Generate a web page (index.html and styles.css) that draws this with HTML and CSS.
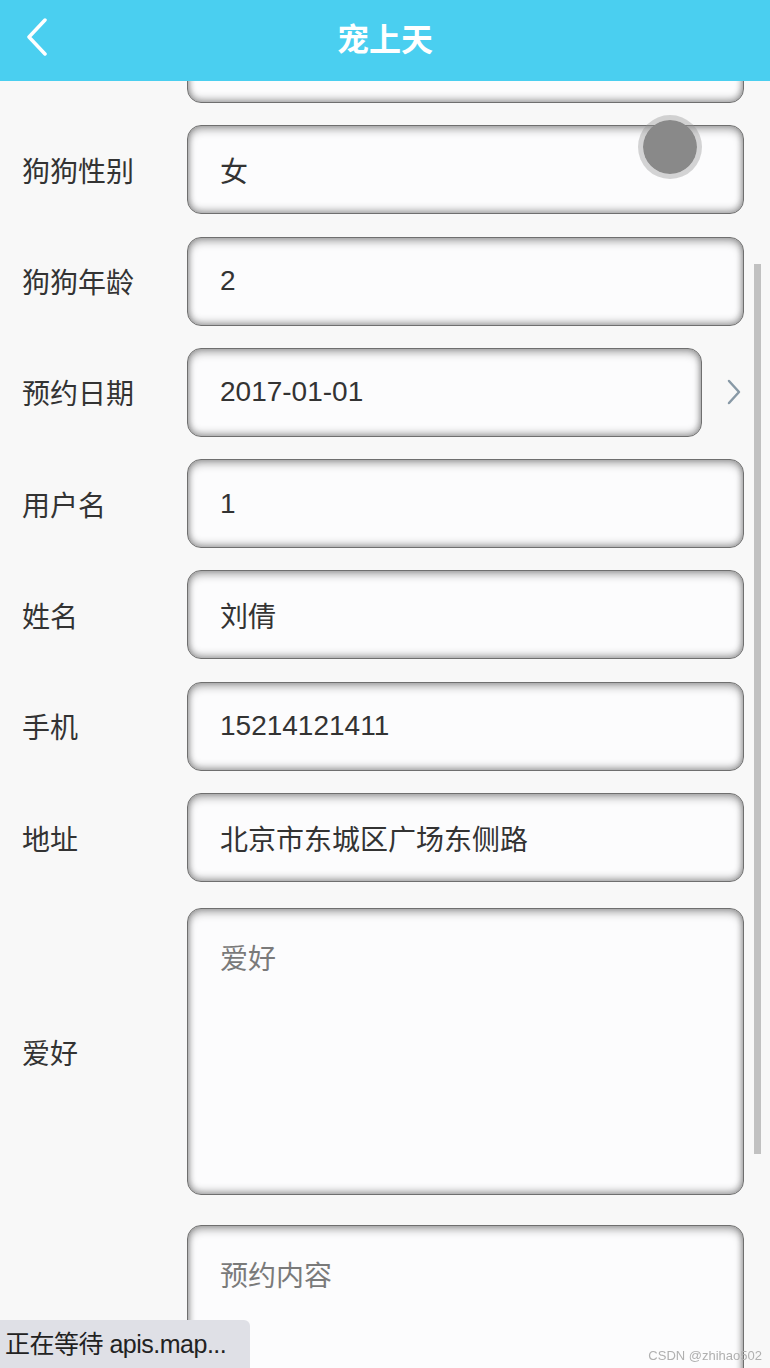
FILE: index.html
```html
<html>
<head>
	<meta charset="utf-8">
	<title>宠上天</title>
	<link rel="stylesheet" href="styles.css">
</head>
<body>
	<div class="topbar">
		<span class="back">
			<svg width="24" height="38" viewBox="0 0 24 38"><path d="M20 2 L4 19 L20 36" fill="none" stroke="#fff" stroke-width="3.5" stroke-linecap="round" stroke-linejoin="round"/></svg>
		</span>
		<span class="title">宠上天</span>
	</div>
	<div class="scroller">
		<div class="form">
			<div class="row">
				<label class="fieldname"></label>
				<input class="field" type="text" value="">
			</div>
			<div class="row">
				<label class="fieldname">狗狗性别</label>
				<input class="field" type="text" value="女">
			</div>
			<div class="row">
				<label class="fieldname">狗狗年龄</label>
				<input class="field" type="text" value="2">
			</div>
			<div class="row">
				<label class="fieldname">预约日期</label>
				<input class="field date" type="text" value="2017-01-01">
				<span class="arrow">
					<svg width="16" height="28" viewBox="0 0 16 28"><path d="M3 3 L13 14 L3 25" fill="none" stroke="#8899a6" stroke-width="2.5" stroke-linecap="round" stroke-linejoin="round"/></svg>
				</span>
			</div>
			<div class="row">
				<label class="fieldname">用户名</label>
				<input class="field" type="text" value="1">
			</div>
			<div class="row">
				<label class="fieldname">姓名</label>
				<input class="field" type="text" value="刘倩">
			</div>
			<div class="row">
				<label class="fieldname">手机</label>
				<input class="field" type="text" value="15214121411">
			</div>
			<div class="row">
				<label class="fieldname">地址</label>
				<input class="field" type="text" value="北京市东城区广场东侧路">
			</div>
			<div class="row big first">
				<label class="fieldname">爱好</label>
				<textarea class="field area" placeholder="爱好"></textarea>
			</div>
			<div class="row big">
				<label class="fieldname"></label>
				<textarea class="field area" placeholder="预约内容"></textarea>
			</div>
		</div>
		<div class="scrollthumb"></div>
	</div>
	<div class="touchdot"></div>
	<div class="status">正在等待 apis.map...</div>
	<div class="mark">CSDN @zhihao502</div>
</body>
</html>
```

FILE: styles.css
```css
body {
	margin: 0;
	background-color: #f8f8f8;
	font-family: "Liberation Sans", "Noto Sans CJK SC", sans-serif;
	color: #333;
	overflow: hidden;
}

.topbar {
	height: 81px;
	background-color: #4acff0;
	display: flex;
	align-items: center;
	position: relative;
	z-index: 2;
}

.back {
	width: 24px;
	margin-left: 25px;
	margin-top: -8px;
	display: flex;
}

.title {
	flex: 1;
	text-align: center;
	color: white;
	font-size: 32px;
	font-weight: bold;
	margin-left: -49px;
	margin-top: -8px;
}

.scroller {
	height: 1287px;
	overflow: hidden;
	position: relative;
}

.form {
	margin-top: -67px;
	padding-right: 26px;
}

.row {
	display: flex;
	align-items: center;
	height: 89px;
	margin-bottom: 22.3px;
}

.row.big {
	height: 287px;
	margin-bottom: 30px;
}

.row.first {
	margin-top: 26px;
}

.fieldname {
	width: 187px;
	padding-left: 22px;
	box-sizing: border-box;
	font-size: 28px;
	color: #333;
	flex-shrink: 0;
}

.field {
	flex: 1;
	height: 89px;
	box-sizing: border-box;
	border: 1px solid #6f6f6f;
	border-radius: 14px;
	background-color: #fcfcfd;
	padding: 0 0 0 32px;
	font-family: "Liberation Sans", "Noto Sans CJK SC", sans-serif;
	font-size: 28px;
	color: #333;
	outline: none;
	box-shadow:	inset 0 4px 8px rgba(0, 0, 0, 0.28),
				inset 0 -4px 7px rgba(0, 0, 0, 0.2),
				inset 0 0 6px rgba(0, 0, 0, 0.22);
}

.field.date {
	flex: none;
	width: 515px;
}

.field.area {
	height: 287px;
	padding-top: 28px;
	resize: none;
}

.field.area::placeholder {
	color: #7a7a7a;
}

.arrow {
	margin-left: 24px;
	display: flex;
}

.scrollthumb {
	position: absolute;
	left: 754px;
	top: 183px;
	width: 7px;
	height: 890px;
	background-color: #c1c1c1;
}

.touchdot {
	position: absolute;
	left: 638px;
	top: 115px;
	width: 54px;
	height: 54px;
	border-radius: 50%;
	background-color: #898989;
	border: 5px solid rgba(150, 150, 150, 0.4);
	background-clip: padding-box;
	z-index: 3;
}

.status {
	position: fixed;
	left: 0;
	bottom: 0;
	width: 240px;
	height: 48px;
	line-height: 48px;
	padding-left: 5px;
	padding-right: 5px;
	background-color: #dfe0e6;
	border-top-right-radius: 6px;
	font-size: 25px;
	letter-spacing: -0.5px;
	color: #222;
	white-space: nowrap;
	z-index: 3;
}

.mark {
	position: fixed;
	right: 8px;
	bottom: 5px;
	font-size: 13px;
	color: #b0b0b0;
	z-index: 3;
}
```
